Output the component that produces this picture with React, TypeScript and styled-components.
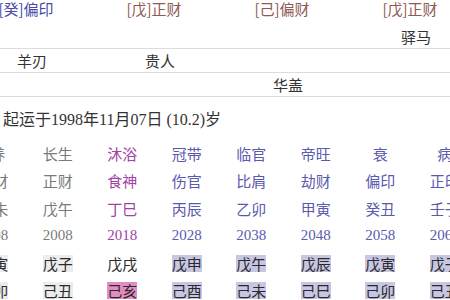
import React from "react";
import styled, { createGlobalStyle } from "styled-components";

const Global = createGlobalStyle`
  html, body { margin: 0; padding: 0; background: #fff; overflow: hidden; }
  body { font-family: "Noto Sans CJK SC", "Noto Sans", sans-serif; color: #333; }
`;

const Page = styled.div`
  width: 450px;
  height: 300px;
  overflow: hidden;
`;

const GodRow = styled.div`
  display: grid;
  grid-template-columns: repeat(4, 128px);
  margin-left: -38px;
  height: 25px;
`;

const GodCell = styled.div<{ $tone: "blue" | "brown" }>`
  text-align: center;
  font-size: 15px;
  line-height: 18px;
  color: ${(p) => (p.$tone === "blue" ? "#4848a6" : "#8e5a55")};
`;

const ShaRow = styled.div`
  display: grid;
  grid-template-columns: repeat(4, 128px);
  margin-left: -32px;
  width: 520px;
  height: 23px;
  border-bottom: 1px solid #dcdcdc;
`;

const ShaCell = styled.div`
  text-align: center;
  font-size: 15px;
  line-height: 23px;
  color: #333;
`;

const StartLine = styled.div`
  margin-top: 8px;
  padding-left: 3px;
  height: 30px;
  font-family: "Liberation Serif", "Noto Sans CJK SC", serif;
  font-size: 16px;
  line-height: 30px;
  color: #333;
`;

const Table = styled.div`
  display: grid;
  grid-template-columns: repeat(8, 64.5px);
  grid-auto-rows: 27.4px;
  margin-left: -39px;
  margin-top: 5px;
`;

type Tone = "gray" | "magenta" | "blue";

const toneColor: Record<Tone, string> = {
  gray: "#7a7a7a",
  magenta: "#a042a6",
  blue: "#5a5aae",
};

const Cell = styled.div<{ $tone: Tone; $serif?: boolean; $shift?: number }>`
  text-align: center;
  font-size: 15px;
  line-height: 27px;
  padding-left: ${(p) => p.$shift ?? 0}px;
  color: ${(p) => toneColor[p.$tone]};
  font-family: ${(p) =>
    p.$serif
      ? `"Liberation Serif", "Noto Sans CJK SC", serif`
      : `"Noto Sans CJK SC", sans-serif`};
`;

type Hl = "none" | "gray" | "pink" | "lav";
const hlColor: Record<Hl, string> = {
  none: "transparent",
  gray: "#ececec",
  pink: "#e38cc2",
  lav: "#c7c7e3",
};

const PillarCell = styled.div`
  display: flex;
  align-items: center;
  justify-content: center;
`;

const Mark = styled.span<{ $hl: Hl }>`
  display: inline-block;
  font-size: 15px;
  line-height: 17px;
  height: 17px;
  background: ${(p) => hlColor[p.$hl]};
  color: #2a2a2a;
`;

const cols: {
  stage: string;
  god: string;
  gz: string;
  year: string;
  a: string;
  b: string;
  tone: Tone;
  hlA: Hl;
  hlB: Hl;
  shift?: number;
}[] = [
  { stage: "养", god: "偏财", gz: "己未", year: "1998", a: "戊寅", b: "己卯", tone: "gray", hlA: "gray", hlB: "gray", shift: 9 },
  { stage: "长生", god: "正财", gz: "戊午", year: "2008", a: "戊子", b: "己丑", tone: "gray", hlA: "gray", hlB: "gray" },
  { stage: "沐浴", god: "食神", gz: "丁巳", year: "2018", a: "戊戌", b: "己亥", tone: "magenta", hlA: "none", hlB: "pink" },
  { stage: "冠带", god: "伤官", gz: "丙辰", year: "2028", a: "戊申", b: "己酉", tone: "blue", hlA: "lav", hlB: "lav" },
  { stage: "临官", god: "比肩", gz: "乙卯", year: "2038", a: "戊午", b: "己未", tone: "blue", hlA: "lav", hlB: "lav" },
  { stage: "帝旺", god: "劫财", gz: "甲寅", year: "2048", a: "戊辰", b: "己巳", tone: "blue", hlA: "lav", hlB: "lav" },
  { stage: "衰", god: "偏印", gz: "癸丑", year: "2058", a: "戊寅", b: "己卯", tone: "blue", hlA: "lav", hlB: "lav" },
  { stage: "病", god: "正印", gz: "壬子", year: "2068", a: "戊子", b: "己丑", tone: "blue", hlA: "lav", hlB: "lav" },
];

export default function App() {
  return (
    <Page>
      <Global />
      <GodRow>
        <GodCell $tone="blue">[癸]偏印</GodCell>
        <GodCell $tone="brown">[戊]正财</GodCell>
        <GodCell $tone="brown">[己]偏财</GodCell>
        <GodCell $tone="brown">[戊]正财</GodCell>
      </GodRow>
      <ShaRow>
        <ShaCell />
        <ShaCell />
        <ShaCell />
        <ShaCell>驿马</ShaCell>
      </ShaRow>
      <ShaRow>
        <ShaCell>羊刃</ShaCell>
        <ShaCell>贵人</ShaCell>
        <ShaCell />
        <ShaCell />
      </ShaRow>
      <ShaRow>
        <ShaCell />
        <ShaCell />
        <ShaCell>华盖</ShaCell>
        <ShaCell />
      </ShaRow>
      <StartLine>起运于1998年11月07日 (10.2)岁</StartLine>
      <Table>
        {cols.map((c) => (
          <Cell key={"s" + c.year} $tone={c.tone} $shift={c.shift}>{c.stage}</Cell>
        ))}
        {cols.map((c) => (
          <Cell key={"g" + c.year} $tone={c.tone}>{c.god}</Cell>
        ))}
        {cols.map((c) => (
          <Cell key={"z" + c.year} $tone={c.tone}>{c.gz}</Cell>
        ))}
        {cols.map((c) => (
          <Cell key={"y" + c.year} $tone={c.tone} $serif>{c.year}</Cell>
        ))}
        {cols.map((c) => (
          <PillarCell key={"a" + c.year}>
            <Mark $hl={c.hlA}>{c.a}</Mark>
          </PillarCell>
        ))}
        {cols.map((c) => (
          <PillarCell key={"b" + c.year}>
            <Mark $hl={c.hlB}>{c.b}</Mark>
          </PillarCell>
        ))}
      </Table>
    </Page>
  );
}
